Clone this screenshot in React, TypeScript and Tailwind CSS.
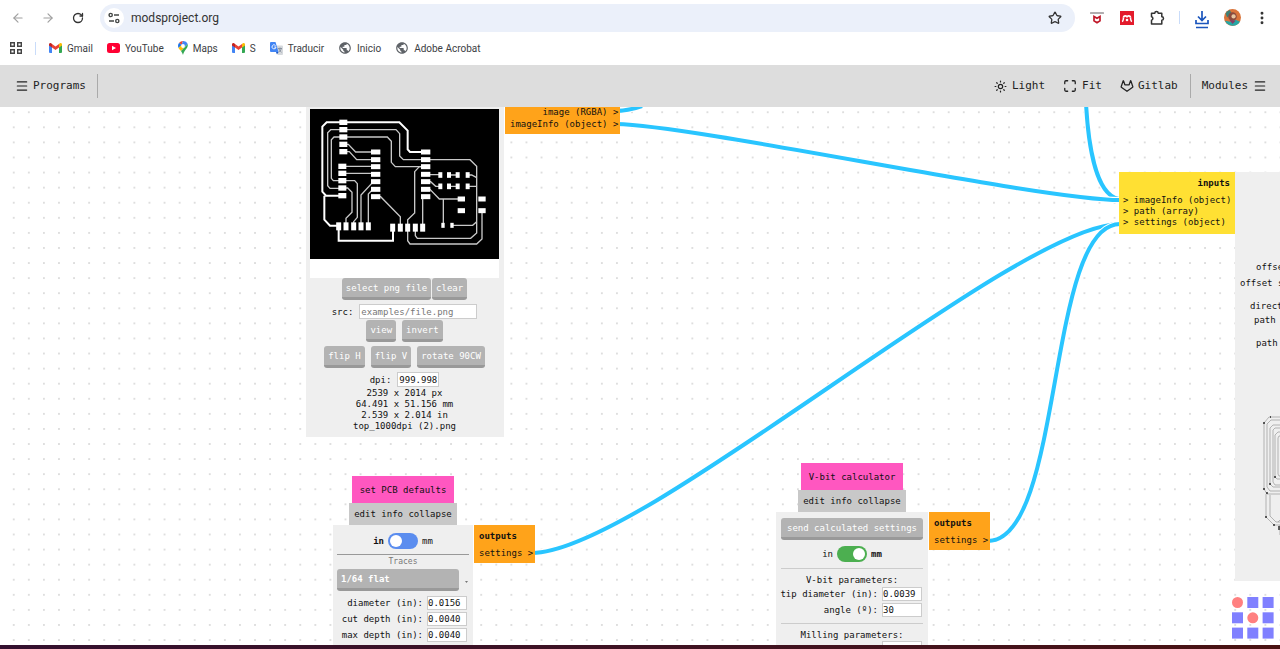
import { useState } from 'react';
import { ArrowLeft, ArrowRight, Gitlab, Maximize, Menu, MoreVertical, RotateCw, Star } from 'lucide-react';
import { MdPublic } from 'react-icons/md';
import clsx from 'clsx';

const GmailIcon = () => (
    <svg viewBox="0 0 26 20" className="w-[13px] h-[10px]">
        <path d="M0 3v15a2 2 0 0 0 2 2h4V8z" fill="#4285f4" />
        <path d="M26 3v15a2 2 0 0 1-2 2h-4V8z" fill="#34a853" />
        <path d="M20 2v7l6-4V3c0-3-3-4-5-2z" fill="#fbbc04" />
        <path d="M0 3v2l6 4V2L5 1C3-1 0 0 0 3z" fill="#c5221f" />
        <path d="M6 2v7l7 5 7-5V2l-7 5z" fill="#ea4335" />
    </svg>
);

const YoutubeIcon = () => (
    <svg viewBox="0 0 26 20" className="w-[13px] h-[10px]">
        <rect width="26" height="20" rx="5" fill="#ff0033" />
        <path d="M10 5.500l8 4.500-8 4.500z" fill="#fff" />
    </svg>
);

const MapsIcon = () => (
    <svg viewBox="0 0 20 28" className="w-[10px] h-[14px]">
        <path d="M10 0a10 10 0 0 0-7.700 3.700L7 8z" fill="#ea4335" />
        <path d="M2.300 3.700A10 10 0 0 0 1 14l6-6z" fill="#1a73e8" />
        <path d="M10 0L7 8l6 4 6.500-6A10 10 0 0 0 10 0z" fill="#4285f4" />
        <path d="M1 14c1 2 3 4 5 6l7-8-6-4z" fill="#fbbc04" />
        <path d="M19.500 6C21 14 12 18 10 28c-1-3-2-5.500-4-8z" fill="#34a853" />
        <circle cx="10" cy="10" r="3.800" fill="#fff" />
    </svg>
);

const TranslateIcon = () => (
    <svg viewBox="0 0 26 26" className="w-[13px] h-[13px]">
        <path d="M10 7h14a2 2 0 0 1 2 2v15a2 2 0 0 1-2 2h-8z" fill="#d5d8dc" />
        <path d="M2 0h9l6 20H2a2 2 0 0 1-2-2V2a2 2 0 0 1 2-2z" fill="#4285f4" />
        <path d="M12 20h5l-3 5z" fill="#1a56c4" />
        <path d="M11 7a4 4 0 1 0 1 3H8.500" fill="none" stroke="#fff" strokeWidth="1.800" />
        <path d="M16 13h8M20 11v2M22.500 13c-1 4-3 6-5 7M18 14c1 3 3 5 5 6.500" fill="none" stroke="#7b8794" strokeWidth="1.600" />
    </svg>
);

const TuneIcon = () => (
    <svg viewBox="0 0 12 12" className="w-3 h-3" fill="none" stroke="#444746" strokeWidth="1.400">
        <circle cx="2.700" cy="3" r="1.600" />
        <path d="M6 3h5M1 9h5" />
        <circle cx="9.300" cy="9" r="1.600" />
    </svg>
);

const PuzzleIcon = () => (
    <svg viewBox="0 0 16 16" className="w-4 h-4" fill="none" stroke="#333" strokeWidth="1.500" strokeLinejoin="round">
        <path d="M2.500 3.200h3.300a1.700 1.700 0 0 1 3.400 0h3.600v3.600a1.700 1.700 0 0 1 0 3.400v3.800H2.500v-3.800a1.800 1.800 0 0 0 0-3.500z" />
    </svg>
);

const SunIcon = () => (
    <svg viewBox="0 0 24 24" className="w-[13px] h-[13px]" fill="none" stroke="#222" strokeWidth="2.200" strokeLinecap="round">
        <circle cx="12" cy="12" r="4" />
        <path d="M12 2v1.500M12 20.500V22M2 12h1.500M20.500 12H22M5 5l1 1M18 18l1 1M5 19l1-1M18 6l1-1" />
    </svg>
);

const bookmarks = [
    { label: 'Gmail', icon: <GmailIcon /> },
    { label: 'YouTube', icon: <YoutubeIcon /> },
    { label: 'Maps', icon: <MapsIcon /> },
    { label: 'S', icon: <GmailIcon /> },
    { label: 'Traducir', icon: <TranslateIcon /> },
    { label: 'Inicio', icon: <MdPublic className="w-[14px] h-[14px] text-[#5f6368]" /> },
    { label: 'Adobe Acrobat', icon: <MdPublic className="w-[14px] h-[14px] text-[#5f6368]" /> },
];

const navButton = "w-[30px] h-7 flex items-center justify-center shrink-0";

function BrowserBar() {
    return (
        <header className="bg-white shrink-0 font-['Roboto','Noto_Sans',sans-serif] text-[#3c4043]">
            <div className="flex items-center h-[35px] px-[3px]">
                <button aria-label="Back" className={navButton}><ArrowLeft className="w-[14px] h-[14px] text-[#a0a0a0]" /></button>
                <button aria-label="Forward" className={navButton}><ArrowRight className="w-[14px] h-[14px] text-[#a0a0a0]" /></button>
                <button aria-label="Reload" className={navButton}><RotateCw className="w-3 h-3 text-[#333]" strokeWidth={2.6} /></button>
                <div className="flex-1 flex items-center h-7 mx-[7px] pl-1 rounded-full bg-[#ebf0fa]">
                    <button aria-label="Site information" className="w-5 h-5 rounded-full bg-white flex items-center justify-center">
                        <TuneIcon />
                    </button>
                    <input
                        aria-label="Address"
                        defaultValue="modsproject.org"
                        className="flex-1 min-w-0 ml-[7px] bg-transparent text-[12px] text-[#333] outline-none"
                    />
                    <button aria-label="Bookmark" className="w-10 flex justify-center"><Star className="w-[14px] h-[14px] text-[#333]" strokeWidth={2.2} /></button>
                </div>
                <button aria-label="McAfee" className={navButton}>
                    <svg viewBox="0 0 14 12" className="w-[14px] h-3">
                        <rect width="14" height="2" rx="0.500" fill="#b0aeb0" />
                        <path d="M4 4.500l3 1.800 3-1.800v4.300L7 10.800 4 8.800z" fill="none" stroke="#c01829" strokeWidth="1.700" />
                    </svg>
                </button>
                <button aria-label="Mendeley" className={navButton}>
                    <svg viewBox="0 0 14 14" className="w-[14px] h-[14px]">
                        <rect width="14" height="14" fill="#e31b2c" />
                        <path d="M2 10.500c1.800-.5 1-2.200 1.600-4M12 10.500c-1.800-.5-1-2.200-1.600-4" fill="none" stroke="#fff" strokeWidth="1.500" />
                        <path d="M3.600 6.500a1.700 1.700 0 0 1 3.400 0 1.700 1.700 0 0 1 3.400 0" fill="none" stroke="#fff" strokeWidth="1.800" />
                        <circle cx="7" cy="9" r="1.300" fill="#fff" />
                    </svg>
                </button>
                <button aria-label="Extensions" className={navButton}><PuzzleIcon /></button>
                <span className="w-[15px] flex justify-center"><span className="w-px h-[13px] bg-[#c9dcfa]" /></span>
                <button aria-label="Downloads" className={navButton}>
                    <svg viewBox="0 0 14 18" className="w-[14px] h-[18px] mt-1" fill="none" stroke="#1a55bd" strokeWidth="1.700">
                        <path d="M7 0v9M3 5.500l4 4 4-4M1 9v3.500h12V9M1 16.500h12" />
                    </svg>
                </button>
                <button aria-label="Profile" className={navButton}>
                    <svg viewBox="0 0 16 16" className="w-[17px] h-[17px]">
                        <circle cx="8" cy="8" r="8" fill="#d9743a" />
                        <path d="M1 11a8 8 0 0 0 14 1l-4-2-5 2z" fill="#25a7a5" />
                        <path d="M1.500 4a8 8 0 0 1 4-3L7 4 3 8z" fill="#3c8178" />
                        <circle cx="8" cy="7" r="4" fill="#8a4a3c" />
                        <circle cx="9" cy="7" r="2" fill="#e6c6a2" />
                        <path d="M5 10l3 4 3-3" fill="#853e68" />
                    </svg>
                </button>
                <button aria-label="Menu" className={navButton}><MoreVertical className="w-4 h-4 text-[#333]" strokeWidth={2.4} /></button>
            </div>
            <nav className="flex items-center h-[30px] pb-1 pl-[10px] text-[10px]">
                <button aria-label="Apps">
                    <svg viewBox="0 0 12 12" className="w-3 h-3" fill="none" stroke="#444" strokeWidth="1.400">
                        <path d="M.7.7h3.600v3.600H.7zM7.700.7h3.600v3.600H7.700zM.7 7.700h3.600v3.600H.7zM7.700 7.700h3.600v3.600H7.700z" />
                    </svg>
                </button>
                <span className="w-px h-[13px] bg-[#c9dcfa] ml-[13px] mr-[13px]" />
                <div className="flex items-center gap-[14px]">
                    {bookmarks.map((b) => (
                        <a key={b.label} href="#" className="flex items-center gap-[5px]">
                            {b.icon}
                            <span>{b.label}</span>
                        </a>
                    ))}
                </div>
            </nav>
        </header>
    );
}

function Toolbar() {
    return (
        <div className="flex items-center justify-between h-[42px] shrink-0 bg-[#ddd] pl-[15px] pr-[13px] text-[11px] text-[#222]">
            <div className="flex items-center gap-[11px]">
                <button className="flex items-center gap-1"><Menu className="w-[14px] h-[14px]" />Programs</button>
                <span className="w-px h-6 bg-[#aaa]" />
            </div>
            <div className="flex items-center">
                <div className="flex items-center gap-[18px] pr-3">
                    <button className="flex items-center gap-[5px]"><SunIcon />Light</button>
                    <button className="flex items-center gap-[5px]"><Maximize className="w-[14px] h-[14px]" strokeWidth={2.2} />Fit</button>
                    <a href="#" className="flex items-center gap-1"><Gitlab className="w-[14px] h-[14px]" strokeWidth={2.2} />Gitlab</a>
                </div>
                <span className="w-px h-6 bg-[#aaa]" />
                <button className="flex items-center gap-[5px] pl-[11px]">Modules<Menu className="w-[14px] h-[14px]" /></button>
            </div>
        </div>
    );
}

// pads are [cx, cy] lists grouped by footprint
const padGroups = [
    { w: 24, h: 16, at: [[100, 40], [100, 62], [100, 84], [100, 106], [100, 128], [97, 172], [97, 193], [97, 215], [97, 237], [97, 260]] },
    { w: 28, h: 15, at: [129, 152, 173, 196, 218, 241, 263].flatMap(y => [[197, y], [347, y]]) },
    { w: 15, h: 24, at: [[86, 352], [108, 352], [131, 352], [153, 352], [175, 352], [248, 356], [271, 356], [293, 356], [316, 356], [338, 356]] },
    { w: 12, h: 17, at: [198, 232].flatMap(y => [[391, y], [417, y], [443, y], [473, y]]) },
    { w: 22, h: 15, at: [[454, 270], [516, 270], [454, 305], [516, 305]] },
    { w: 10, h: 15, at: [[399, 349], [426, 349]] },
];

const BoardPreview = () => (
    <svg viewBox="0 0 567 450" className="w-full block bg-black">
        <g fill="none" stroke="#fff" strokeWidth="6">
            <path d="M100 40H268L293 65V121L300 129H347M100 40H50L37 53V248L48 260H97M43 260V332L60 350H86M86 356V395H249V360" />
        </g>
        <g fill="none" stroke="#c8c8c8" strokeWidth="4">
            <path d="M100 62H62L53 71V230L60 238H97M100 62H258L269 74V141L280 152H480L500 172V372L482 388H322L316 380V360" />
            <path d="M100 84H232L244 97V160L256 173H347M100 84H72L64 92V208L70 215H134L142 224V325L131 338V352" />
            <path d="M100 106H115L137 129H197M100 128H118L140 152H197M97 172H197M97 193H197M97 237H113L126 250V310L108 328V352" />
            <path d="M153 352V258L190 218M175 352V255L188 241M197 263H212L271 323V350M338 350V263" />
            <path d="M347 173H328L314 188V312L293 332V395L300 405H500L516 390V305" />
            <path d="M347 197H391M417 198H443M473 198H485L500 206M347 218H362L377 232H391M417 232H443M473 232H500" />
            <path d="M347 241H360L388 270H454M400 270V349M426 349H488L500 338" />
        </g>
        {padGroups.map((g, i) => (
            <g key={i} fill="#fff">
                {g.at.map(([x, y]) => <rect key={`${x}-${y}`} x={x - g.w / 2} y={y - g.h / 2} width={g.w} height={g.h} />)}
            </g>
        ))}
    </svg>
);

function PushButton({ children, className }: { children: React.ReactNode; className?: string }) {
    return (
        <button className={clsx("h-[22px] px-1 rounded-[3px] bg-[#b3b3b3] border-b-[3px] border-[#999] text-white leading-3", className)}>
            {children}
        </button>
    );
}

function Field({ id, label, value }: { id: string; label: string; value: string }) {
    return (
        <div className="flex items-center justify-end gap-1 h-[14px]">
            <label htmlFor={id} className="whitespace-nowrap">{label}</label>
            <input id={id} defaultValue={value} className="w-10 h-[14px] shrink-0 bg-white border border-[#ccc]" />
        </div>
    );
}

function UnitToggle({ metric, id }: { metric: boolean; id: string }) {
    const [isMm, setIsMm] = useState(metric);
    return (
        <label htmlFor={id} className="flex items-center justify-center gap-1 h-4">
            <span className={clsx(!isMm && "font-bold")}>in</span>
            <input
                id={id}
                type="checkbox"
                checked={isMm}
                onChange={() => setIsMm(!isMm)}
                className="appearance-none w-[30px] h-4 rounded-full bg-[#5b8def] checked:bg-[#4caf50] before:block before:w-3 before:h-3 before:mt-0.5 before:ml-0.5 before:rounded-full before:bg-white checked:before:ml-4"
            />
            <span className={clsx(isMm && "font-bold")}>mm</span>
        </label>
    );
}

function ModuleHeader({ name }: { name: string }) {
    return (
        <div className="flex flex-col items-center">
            <button className="h-[27px] px-2 bg-[#ff57c0]">{name}</button>
            <div className="flex items-center h-[22px] px-[5px] bg-[#c8c8c8]">
                <button>edit</button>&nbsp;<button>info</button>&nbsp;<button>collapse</button>
            </div>
        </div>
    );
}

function SettingsOutput() {
    return (
        <div className="self-start ml-px bg-[#ffa31a] pl-[5px] pr-[2px] pt-[5px] pb-1">
            <div className="font-bold h-[17px]">outputs</div>
            <div className="whitespace-pre">settings &gt;</div>
        </div>
    );
}

function ReadPngModule() {
    return (
        <section className="absolute left-[306px] top-[-1px] flex">
            <div className="w-[198px] bg-[#efefef] pl-1 pr-[5px] pt-[3px] pb-[5px] flex flex-col items-center">
                <div className="w-full bg-white pb-[19px]"><BoardPreview /></div>
                <div className="flex gap-px"><PushButton>select png file</PushButton><PushButton>clear</PushButton></div>
                <div className="flex items-center gap-[6px] mt-1">
                    <label htmlFor="src">src:</label>
                    <input id="src" placeholder="examples/file.png" className="w-[118px] h-[15px] px-px bg-white border border-[#ccc] placeholder:text-[#777]" />
                </div>
                <div className="flex gap-[6px] mt-px"><PushButton>view</PushButton><PushButton>invert</PushButton></div>
                <div className="flex gap-[6px] mt-1"><PushButton>flip H</PushButton><PushButton>flip V</PushButton><PushButton>rotate 90CW</PushButton></div>
                <div className="flex items-center gap-[6px] mt-1 mb-px">
                    <label htmlFor="dpi">dpi:</label>
                    <input id="dpi" defaultValue="999.998" className="w-[42px] h-[15px] px-px bg-white border border-[#ccc]" />
                </div>
                <div className="text-center leading-[11px]">
                    <p>2539 x 2014 px</p>
                    <p>64.491 x 51.156 mm</p>
                    <p>2.539 x 2.014 in</p>
                    <p>top_1000dpi (2).png</p>
                </div>
            </div>
            <div className="self-start ml-px bg-[#ffa31a] pl-[5px] pr-[2px] pb-1 text-right">
                <div>image (RGBA) &gt;</div>
                <div>imageInfo (object) &gt;</div>
            </div>
        </section>
    );
}

function PcbDefaultsModule() {
    return (
        <section className="absolute left-[333px] top-[369px] grid grid-cols-[140px_auto]">
            <ModuleHeader name="set PCB defaults" />
            <div className="col-start-1 bg-[#efefef] px-1 pt-2 pb-5">
                <UnitToggle metric={false} id="pcb-units" />
                <hr className="border-[#999] mt-[5px]" />
                <p className="text-center text-[8px] text-[#777] mt-px">Traces</p>
                <div className="flex items-end justify-between mt-px">
                    <select aria-label="Tool" className="appearance-none w-[122px] h-[22px] px-1 rounded-[3px] bg-[#b3b3b3] border-b-[3px] border-[#999] text-white font-bold leading-3">
                        <option>1/64 flat</option>
                    </select>
                    <svg viewBox="0 0 3 2" className="w-[3px] h-[2px] mb-2 mr-px"><path d="M0 0h3L1.500 2z" fill="#777" /></svg>
                </div>
                <div className="flex flex-col gap-[2px] mt-[5px] pr-[2px]">
                    <Field id="diameter" label="diameter (in):" value="0.0156" />
                    <Field id="cut-depth" label="cut depth (in):" value="0.0040" />
                    <Field id="max-depth" label="max depth (in):" value="0.0040" />
                </div>
            </div>
            <SettingsOutput />
        </section>
    );
}

function VbitModule() {
    return (
        <section className="absolute left-[776px] top-[356px] grid grid-cols-[152px_auto]">
            <ModuleHeader name="V-bit calculator" />
            <div className="col-start-1 bg-[#efefef] px-[5px] pt-[6px] pb-5">
                <PushButton className="w-full">send calculated settings</PushButton>
                <div className="mt-[6px]"><UnitToggle metric id="vbit-units" /></div>
                <hr className="border-[#ccc] mt-[6px]" />
                <p className="text-center mt-[5px]">V-bit parameters:</p>
                <div className="flex flex-col gap-[2px] mt-px pr-px">
                    <Field id="tip" label="tip diameter (in):" value="0.0039" />
                    <Field id="angle" label="angle (º):" value="30" />
                </div>
                <hr className="border-[#ccc] mt-[6px]" />
                <p className="text-center mt-[5px]">Milling parameters:</p>
                <div className="flex justify-end pr-px">
                    <input aria-label="Milling value" className="w-10 h-[14px] bg-white border border-[#ccc]" />
                </div>
            </div>
            <SettingsOutput />
        </section>
    );
}

function MillModule() {
    return (
        <section className="absolute left-[1119px] top-[65px] flex">
            <div className="self-start w-[116px] bg-[#ffe033] px-1 pt-[6px] pb-[6px] leading-[11px]">
                <div className="font-bold text-right h-[17px] pr-px">inputs</div>
                <div className="whitespace-nowrap">&gt; imageInfo (object)</div>
                <div>&gt; path (array)</div>
                <div>&gt; settings (object)</div>
            </div>
            <div className="w-[60px] bg-[#efefef] pt-[89px] pb-[46px] pl-px overflow-hidden whitespace-nowrap">
                <p className="pl-5">offset</p>
                <p className="pl-1 mt-1">offset s</p>
                <p className="pl-[14px] mt-[11px]">direct</p>
                <p className="pl-[18px] mt-[2px]">path</p>
                <p className="pl-5 mt-[11px]">path</p>
                <svg viewBox="0 0 20 120" className="w-5 h-[120px] ml-[26px] mt-[66px]" fill="none" stroke="#999" strokeWidth="0.700">
                    <path d="M20 2H7L2 8v66l3 5h15M20 5H9L5 9v63l3 4h12M20 10H11l-3 3v56l3 3h9M20 13h-7l-2 2v52l2 3h7M20 17h-4l-3 3v42l2 2h5M20 21h-3l-1 2v36l1 2h3" />
                    <path d="M4 79v23l8 8h8M8 80v21l6 6h6M16 107l3-3M18 110v10" />
                    <path d="M2 7v2M8 2h1M2 73v2M5 77v2M4 101v2M12 109v2M8 68v2M13 61v2M17 111v4" stroke="#222" strokeWidth="1.400" />
                </svg>
            </div>
        </section>
    );
}

const wires = [
    'M614 4Q628 4 642 -1',
    'M1086 -4C1088 34 1095 88 1119 92',
    'M616 17C700 19 1040 93 1120 93',
    'M532 446C640 446 1015 117 1120 117',
    'M988 434C1064 434 1046 117 1120 117',
];

export default function App() {
    return (
        <div className="flex flex-col h-screen overflow-hidden bg-white">
            <BrowserBar />
            <div className="flex-1 min-h-0 flex flex-col font-['DejaVu_Sans_Mono','Liberation_Mono',monospace]">
                <Toolbar />
                <main className="relative flex-1 min-h-0 overflow-hidden bg-white text-[9px] leading-3 text-[#111]">
                    {/* Grid and wires */}
                    <svg className="absolute inset-0 w-full h-full">
                        <defs>
                            <pattern id="dots" x="6.200" y="-2.300" width="15.080" height="15.080" patternUnits="userSpaceOnUse">
                                <circle cx="7.540" cy="7.540" r="0.900" fill="#d0d0d0" />
                            </pattern>
                        </defs>
                        <rect width="100%" height="100%" fill="url(#dots)" />
                        {wires.map((d) => (
                            <g key={d} fill="none">
                                <path d={d} stroke="#fff" strokeWidth="6" />
                                <path d={d} stroke="#29c5ff" strokeWidth="4" />
                            </g>
                        ))}
                    </svg>

                    <ReadPngModule />
                    <PcbDefaultsModule />
                    <VbitModule />
                    <MillModule />

                    {/* Logo */}
                    <svg viewBox="0 0 42 42" className="absolute right-[6px] bottom-[6px] w-[42px] h-[42px]">
                        {[0, 1, 2].flatMap(r => [0, 1, 2].map(c => (
                            r === c && r < 2
                                ? <circle key={`${r}${c}`} cx={c * 15.300 + 5.500} cy={r * 15.300 + 5.500} r="5.500" fill="#ff8080" />
                                : <rect key={`${r}${c}`} x={c * 15.300} y={r * 15.300} width="11" height="11" fill="#8080ff" />
                        )))}
                    </svg>
                </main>
            </div>
            <footer className="h-1 shrink-0 bg-gradient-to-r from-[#34102f] to-[#4a1212]" />
        </div>
    );
}
